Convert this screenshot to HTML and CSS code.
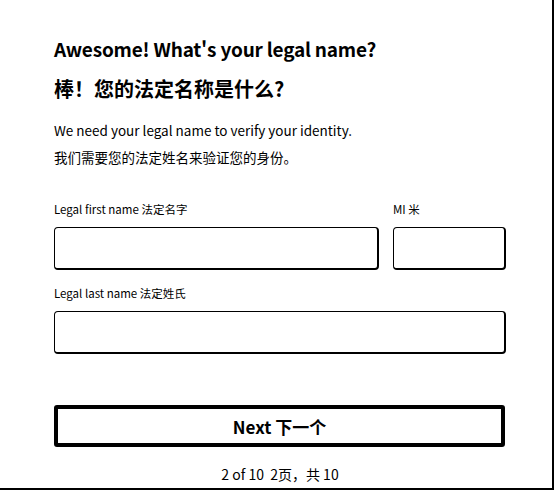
FILE: index.html
```html
<!DOCTYPE html>
<html lang="zh-CN">
<head>
  <meta charset="UTF-8" />
  <meta name="viewport" content="width=device-width, initial-scale=1" />
  <title>Legal name</title>
  <link rel="stylesheet" href="styles.css">
</head>
<body>
  <div class="card">
    <div class="heading">
      <h1 class="en">Awesome! What's your legal name?</h1>
      <h1>棒！您的法定名称是什么?</h1>
    </div>

    <div class="intro">
      <p>We need your legal name to verify your identity.</p>
      <p>我们需要您的法定姓名来验证您的身份。</p>
    </div>

    <div class="row">
      <div class="field grow">
        <label for="first">Legal first name 法定名字</label>
        <input id="first" type="text" />
      </div>
      <div class="field mi">
        <label for="mi">MI 米</label>
        <input id="mi" type="text" />
      </div>
    </div>

    <div class="field">
      <label for="last">Legal last name 法定姓氏</label>
      <input id="last" type="text" />
    </div>

    <button class="next">Next 下一个</button>

    <div class="pager">2 of 10&nbsp; 2页，共 10</div>
  </div>
</body>
</html>
```

FILE: styles.css
```css
body {
  margin: 0;
  font-family: "Noto Sans CJK SC", "Noto Sans", sans-serif;
  color: #000;
  background: #fff;
}

.card {
  width: 554px;
  height: 490px;
  box-sizing: border-box;
  padding: 34px 46px 0 54px;
  border-right: 2px solid #000;
  border-bottom: 2px solid #000;
  display: flex;
  flex-direction: column;
}

.heading {
  display: flex;
  flex-direction: column;
  gap: 10px;
}

h1 {
  margin: 0;
  font-size: 20px;
  line-height: 30px;
  font-weight: 700;
}

h1.en {
  font-size: 19px;
  letter-spacing: -0.2px;
}

.intro {
  margin-top: 17px;
  display: flex;
  flex-direction: column;
  gap: 8px;
}

.intro p {
  margin: 0;
  font-size: 13.5px;
  line-height: 19px;
}

.row {
  display: flex;
  gap: 14px;
  margin-top: 34px;
}

.field {
  display: flex;
  flex-direction: column;
}

.row + .field {
  margin-top: 15px;
}

.grow {
  flex: 1;
}

.mi {
  width: 113px;
}

label {
  font-size: 11.5px;
  line-height: 17px;
  margin-bottom: 9px;
}

input[type="text"] {
  height: 43px;
  box-sizing: border-box;
  border: 1px solid #000;
  border-right-width: 2px;
  border-bottom-width: 2px;
  border-radius: 4px;
  padding: 0 10px;
  font: inherit;
  font-size: 14px;
}

.next {
  margin-top: 51px;
  width: 451px;
  height: 42px;
  background: #fff;
  border: 4px solid #000;
  border-radius: 3px;
  font-family: inherit;
  font-size: 17px;
  font-weight: 700;
  color: #000;
  cursor: pointer;
}

.pager {
  margin-top: 18px;
  text-align: center;
  font-size: 14px;
  line-height: 18px;
}
```
